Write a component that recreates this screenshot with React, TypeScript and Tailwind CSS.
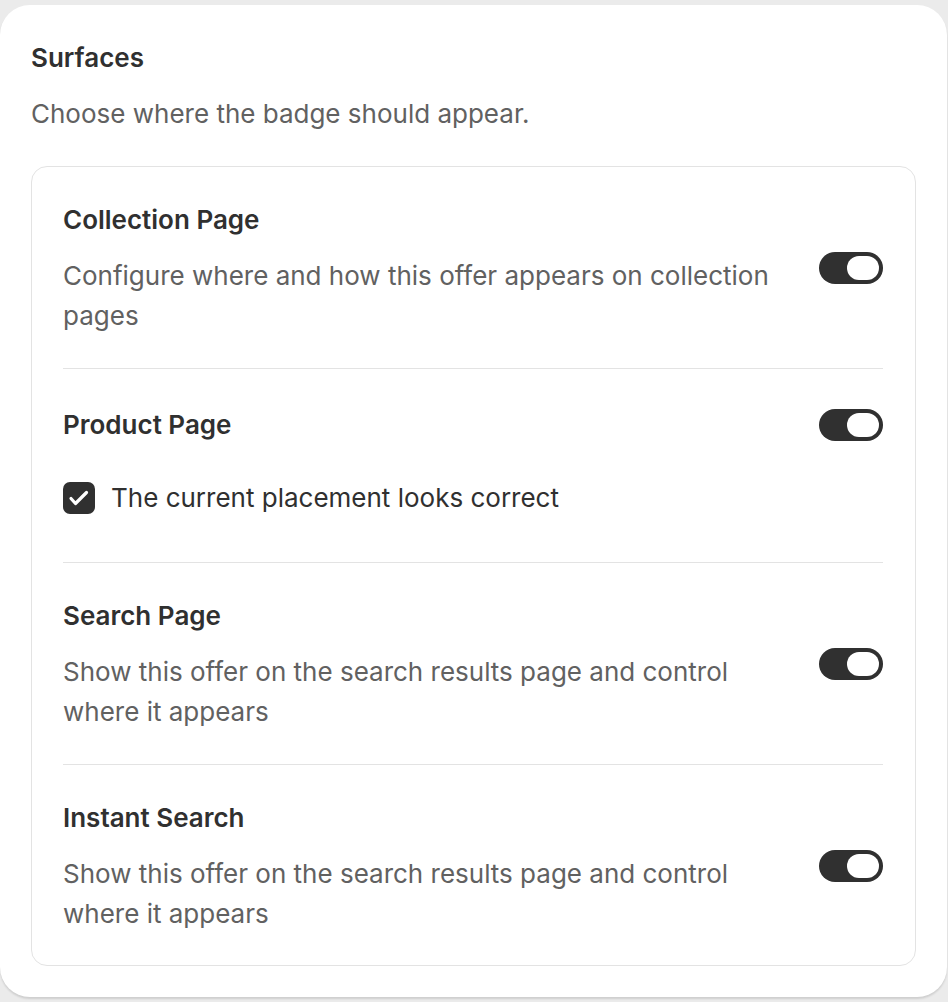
import React from "react";

function Toggle() {
  return (
    <div className="relative h-[32px] w-[64px] shrink-0 rounded-full bg-[#303030]">
      <div className="absolute right-[4px] top-[4px] h-[24px] w-[32px] rounded-full bg-white" />
    </div>
  );
}

function Checkbox() {
  return (
    <div className="flex h-[32px] w-[32px] shrink-0 items-center justify-center rounded-[7px] bg-[#303030]">
      <svg width="32" height="32" viewBox="0 0 32 32" fill="none">
        <path
          d="M8 16.5L12.5 21.5L23.5 10.5"
          stroke="white"
          strokeWidth="3.2"
          strokeLinecap="round"
          strokeLinejoin="round"
        />
      </svg>
    </div>
  );
}

function Section({
  title,
  description,
  last,
}: {
  title: string;
  description: string;
  last?: boolean;
}) {
  return (
    <div
      className={
        last
          ? "flex items-center justify-between gap-[32px] pt-[33px] pb-[31px]"
          : "flex items-center justify-between gap-[32px] border-b border-[#e3e3e3] pt-[33px] pb-[32px]"
      }
    >
      <div className="flex flex-col gap-[16px]">
        <div className="text-[26px] font-semibold leading-[40px] text-[#303030]">{title}</div>
        <div className="text-[26px] leading-[40px] text-[#616161]">{description}</div>
      </div>
      <Toggle />
    </div>
  );
}

export default function App() {
  return (
    <div
      className="min-h-screen bg-[#ebebeb] pt-[5px]"
      style={{ fontFamily: "Inter, 'Noto Sans', sans-serif" }}
    >
      <div className="w-[947px] rounded-[30px] bg-white px-[31px] pt-[33px] pb-[31px] shadow-[0_2px_2px_rgba(0,0,0,0.12)]">
        <div className="text-[26px] font-semibold leading-[40px] text-[#303030]">Surfaces</div>
        <div className="mt-[16px] text-[26px] leading-[40px] text-[#616161]">
          Choose where the badge should appear.
        </div>
        <div className="mt-[32px] rounded-[16px] border border-[#e3e3e3] pl-[31px] pr-[32px]">
          <Section
            title="Collection Page"
            description="Configure where and how this offer appears on collection pages"
          />
          <div className="border-b border-[#e3e3e3] pt-[36px] pb-[44px]">
            <div className="flex h-[40px] items-center justify-between">
              <div className="text-[26px] font-semibold leading-[40px] text-[#303030]">Product Page</div>
              <Toggle />
            </div>
            <div className="mt-[33px] flex h-[40px] items-center gap-[16px]">
              <Checkbox />
              <div className="text-[26px] leading-[40px] text-[#303030]">
                The current placement looks correct
              </div>
            </div>
          </div>
          <Section
            title="Search Page"
            description="Show this offer on the search results page and control where it appears"
          />
          <Section
            title="Instant Search"
            description="Show this offer on the search results page and control where it appears"
            last
          />
        </div>
      </div>
    </div>
  );
}
